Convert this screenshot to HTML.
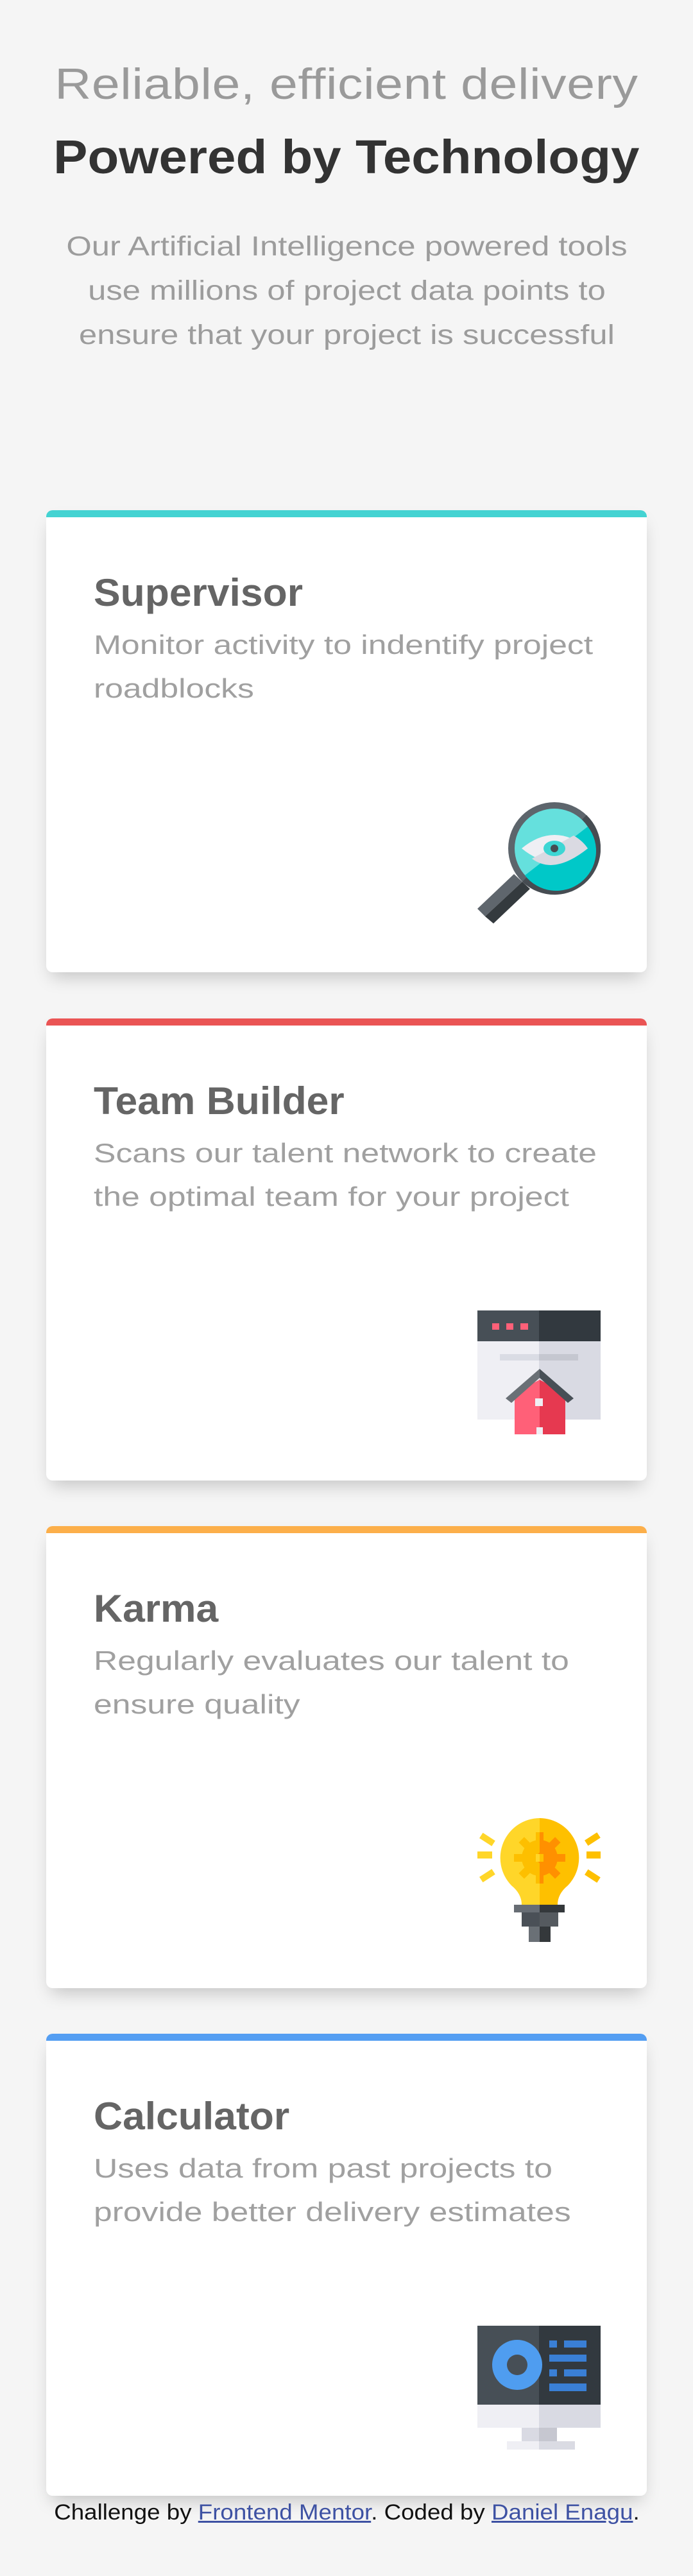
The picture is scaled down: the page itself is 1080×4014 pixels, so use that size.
<!DOCTYPE html>
<html><head><meta charset="utf-8"><style>
*{margin:0;padding:0;box-sizing:border-box}
html,body{width:1080px;height:4014px;background:#f5f5f5;overflow:hidden}
body{position:relative;font-family:"Liberation Sans",Arial,sans-serif}
.c{position:absolute;left:0;width:1080px;text-align:center;white-space:nowrap}
.c>span{display:inline-block;transform-origin:50% 50%}
.h1{top:91px;font-size:68px;line-height:80px;color:#9a9a9a;letter-spacing:0.5px}
.h1>span{transform:scaleX(1.16)}
.h2{top:200px;font-size:74px;line-height:90px;color:#333;font-weight:bold}
.h2>span{transform:scaleX(1.08)}
.p{top:350px;font-size:43px;line-height:69px;color:#9c9c9c}
.p>span{transform:scaleX(1.18)}
.card{position:absolute;left:72px;width:936px;height:720px;background:#fff;border-radius:10px;overflow:hidden;box-shadow:0 14px 28px -8px rgba(0,0,0,.22)}
.bar{position:absolute;left:0;top:0;width:100%;height:11px}
.t{position:absolute;left:74px;top:94px;font-size:60px;line-height:70px;font-weight:bold;color:#656565;white-space:nowrap;transform:scaleX(1.04);transform-origin:0 0}
.d{position:absolute;left:74px;top:176px;font-size:42px;line-height:68px;color:#a0a0a0;white-space:nowrap;transform:scaleX(1.23);transform-origin:0 0}
.ic{position:absolute;right:72px;bottom:72px;width:192px;height:193px}
.f{top:3895px;font-size:34px;line-height:40px;color:#111}
.f>span{transform:scaleX(1.08)}
.f a{color:#3e52a3;text-decoration:underline}
</style></head><body>
<div class="c h1"><span>Reliable, efficient delivery</span></div>
<div class="c h2"><span>Powered by Technology</span></div>
<div class="c p"><span>Our Artificial Intelligence powered tools<br>use millions of project data points to<br>ensure that your project is successful</span></div>

<div class="card" style="top:795px"><div class="bar" style="background:#44d3d2"></div>
<div class="t">Supervisor</div>
<div class="d">Monitor activity to indentify project<br>roadblocks</div>
<svg class="ic" viewBox="0 0 192 193">
<polygon points="0,166 57,112 70,124 12,178" fill="#5f666d"/>
<polygon points="12,178 70,124 82,135 25,189" fill="#343a3e"/>
<circle cx="120" cy="72" r="72" fill="#5d656c"/>
<path d="M170,20 A72,72 0 0 1 70,124 Z" fill="#464c52"/>
<circle cx="120" cy="72" r="62" fill="#65e0dd"/>
<path d="M172,38 A62,62 0 0 1 74,114 Z" fill="#00c8c8"/>
<path d="M69,72 Q120,30 172,72 Q120,114 69,72 Z" fill="#efeff4"/>
<path d="M150,52 Q164,60 172,72 Q120,114 85,88 Z" fill="#dadae2"/>
<ellipse cx="120" cy="72" rx="17" ry="12" fill="#3dd6d4"/>
<circle cx="120" cy="72" r="6" fill="#464c52"/>
</svg></div>

<div class="card" style="top:1587px"><div class="bar" style="background:#ea5454"></div>
<div class="t">Team Builder</div>
<div class="d">Scans our talent network to create<br>the optimal team for your project</div>
<svg class="ic" viewBox="0 0 192 193">
<rect x="0" y="0" width="96" height="48" fill="#474f56"/>
<rect x="96" y="0" width="96" height="48" fill="#32393f"/>
<rect x="23" y="20" width="11" height="10" fill="#ff6078"/>
<rect x="45" y="20" width="11" height="10" fill="#ff6078"/>
<rect x="67" y="20" width="12" height="10" fill="#ff6078"/>
<rect x="0" y="48" width="96" height="122" fill="#efeff4"/>
<rect x="96" y="48" width="96" height="122" fill="#d9dae3"/>
<rect x="35" y="68" width="61" height="10" fill="#dadce4"/>
<rect x="96" y="68" width="61" height="10" fill="#c5c7d0"/>
<polygon points="58,128 97,108 97,193 58,193" fill="#ff6078"/>
<polygon points="97,108 137,128 137,193 97,193" fill="#e63950"/>
<polygon points="97,91 97,105 53,144 44,137" fill="#6a7076"/>
<polygon points="97,91 150,137 141,144 97,105" fill="#474f56"/>
<rect x="90" y="137" width="12" height="12" fill="#efeff4"/>
<rect x="92" y="182" width="10" height="11" fill="#efeff4"/>
</svg></div>

<div class="card" style="top:2378px"><div class="bar" style="background:#fcaf4a"></div>
<div class="t">Karma</div>
<div class="d">Regularly evaluates our talent to<br>ensure quality</div>
<svg class="ic" viewBox="0 0 192 193">
<rect x="0" y="52" width="23" height="11" fill="#ffd629"/>
<rect x="170" y="52" width="23" height="11" fill="#fec000"/>
<rect x="4" y="28" width="23" height="10" fill="#ffd629" transform="rotate(33 15 33)"/>
<rect x="4" y="85" width="23" height="10" fill="#ffd629" transform="rotate(-33 15 90)"/>
<rect x="168" y="28" width="23" height="10" fill="#fec000" transform="rotate(-33 179 33)"/>
<rect x="168" y="85" width="23" height="10" fill="#fec000" transform="rotate(33 179 90)"/>
<path d="M97,0 A62,62 0 0 0 53,105 Q69,118 69,135 L97,135 Z" fill="#ffd629"/>
<path d="M97,0 A62,62 0 0 1 141,105 Q125,118 125,135 L97,135 Z" fill="#fec000"/>
<g fill="#fdbf00"><circle cx="97" cy="62" r="28"/>
<rect x="57" y="56" width="80" height="12"/><rect x="91" y="22" width="12" height="80"/>
<rect x="57" y="56" width="80" height="12" transform="rotate(45 97 62)"/>
<rect x="57" y="56" width="80" height="12" transform="rotate(-45 97 62)"/></g>
<g fill="#ff9000"><path d="M97,34 A28,28 0 0 1 97,90 Z"/>
<rect x="97" y="22" width="6" height="80"/><rect x="97" y="56" width="40" height="12"/>
<rect x="97" y="56" width="40" height="12" transform="rotate(-45 97 62)"/>
<rect x="97" y="56" width="40" height="12" transform="rotate(45 97 62)"/></g>
<rect x="91" y="56" width="6" height="12" fill="#ffd629"/><rect x="97" y="56" width="6" height="12" fill="#fec000"/>
<rect x="57" y="135" width="40" height="12" fill="#676d74"/>
<rect x="97" y="135" width="39" height="12" fill="#34383b"/>
<rect x="69" y="147" width="28" height="22" fill="#4a5057"/>
<rect x="97" y="147" width="29" height="22" fill="#555a5f"/>
<rect x="80" y="169" width="17" height="24" fill="#6a7076"/>
<rect x="97" y="169" width="17" height="24" fill="#34383b"/>
</svg></div>

<div class="card" style="top:3169px"><div class="bar" style="background:#549ef2"></div>
<div class="t">Calculator</div>
<div class="d">Uses data from past projects to<br>provide better delivery estimates</div>
<svg class="ic" viewBox="0 0 192 193">
<rect x="0" y="0" width="96" height="123" fill="#474f56"/>
<rect x="96" y="0" width="96" height="123" fill="#32393f"/>
<circle cx="62" cy="61" r="39" fill="#4f9df0"/>
<circle cx="62" cy="61" r="16" fill="#474f56"/>
<g fill="#3a7fd5"><rect x="112" y="23" width="12" height="11"/><rect x="135" y="23" width="35" height="11"/>
<rect x="112" y="45" width="58" height="11"/>
<rect x="112" y="68" width="12" height="11"/><rect x="135" y="68" width="35" height="11"/>
<rect x="112" y="90" width="58" height="12"/></g>
<rect x="0" y="123" width="96" height="36" fill="#efeff4"/>
<rect x="96" y="123" width="96" height="36" fill="#d9dae3"/>
<rect x="69" y="159" width="27" height="21" fill="#d9dae3"/>
<rect x="96" y="159" width="28" height="21" fill="#c6c7d0"/>
<rect x="46" y="180" width="50" height="13" fill="#efeff4"/>
<rect x="96" y="180" width="56" height="13" fill="#dadbe3"/>
</svg></div>

<div class="c f"><span>Challenge by <a>Frontend Mentor</a>. Coded by <a>Daniel Enagu</a>.</span></div>
</body></html>
